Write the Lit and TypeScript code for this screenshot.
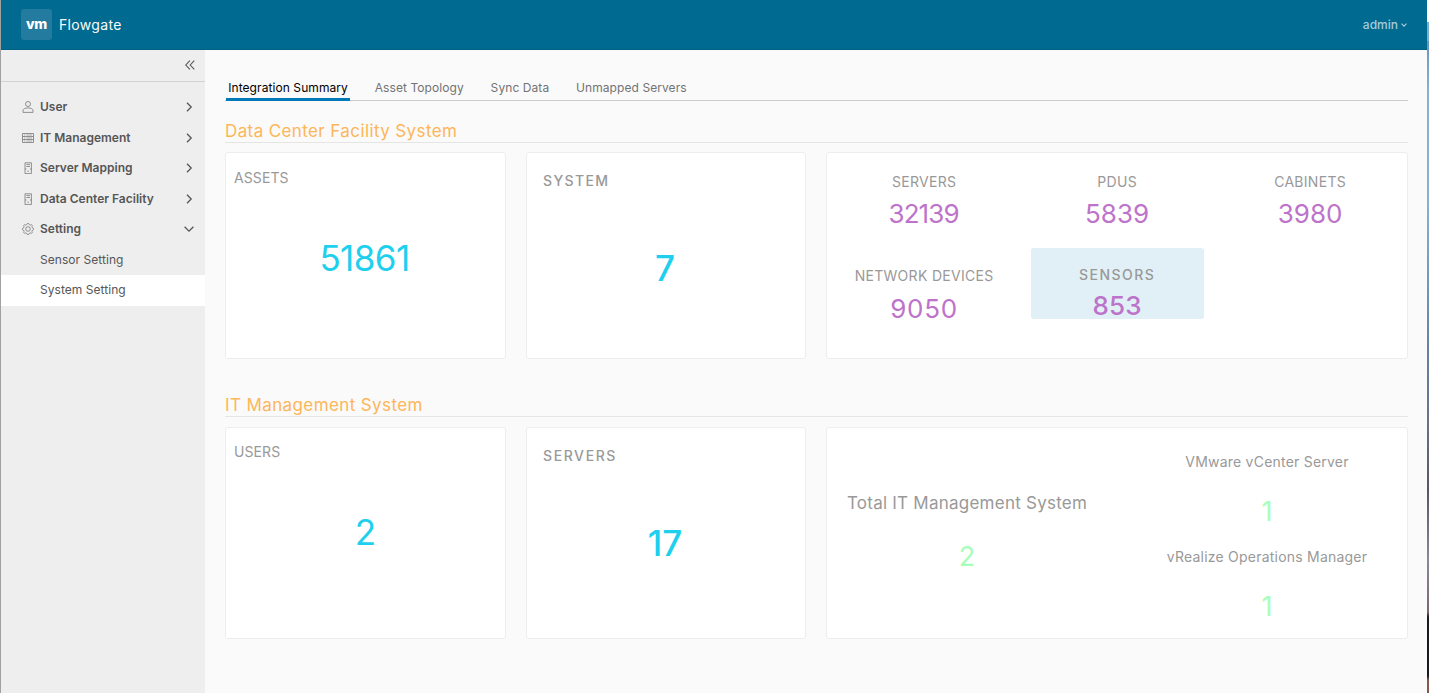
import { LitElement, html, css, svg, TemplateResult } from "lit";
import { customElement } from "lit/decorators.js";
import { classMap } from "lit/directives/class-map.js";

const userIcon = html`<svg class="icon" viewBox="0 0 12 12"><circle cx="6" cy="3" r="2.5"/><path d="M1 11.4V9.6C1 8 3 6.9 6 6.9S11 8 11 9.6v1.8z"/></svg>`;
const rackIcon = html`<svg class="icon" viewBox="0 0 12 12"><path d="M.5 1.5h11v9H.5zM.5 4.5h11M.5 7.5h11"/><path class="faint" d="M2 3h1.2M4.4 3H10M2 6h1.2M4.4 6H10M2 9h1.2M4.4 9H10"/></svg>`;
const hostIcon = html`<svg class="icon" viewBox="0 0 12 12"><path d="M3 .8h6.4v10.8H3zM4.4 2.6H8M4.4 4.5H8M5.4 9.2H7M3 7h1.4M8 7h1.4"/></svg>`;
const gearTeeth = Array.from({ length: 48 }, (_, i) => {
  const angle = (i / 48) * Math.PI * 2;
  const radius = 5.05 + 0.5 * Math.max(-1, Math.min(1, 1.8 * Math.cos(angle * 8)));
  return `${(6 + radius * Math.cos(angle)).toFixed(2)},${(6 + radius * Math.sin(angle)).toFixed(2)}`;
}).join(" ");
const gearIcon = html`<svg class="icon" viewBox="0 0 12 12">${svg`<polygon points=${gearTeeth}/>`}<circle cx="6" cy="6" r="2.3"/></svg>`;

const chevronRight = html`<svg class="chevron" viewBox="0 0 10 10"><path d="M3 .8 7.2 5 3 9.2"/></svg>`;
const chevronDown = html`<svg class="chevron" viewBox="0 0 10 10"><path d="M.6 2.8 5 7.2 9.4 2.8"/></svg>`;

interface NavGroup { label: string; icon: TemplateResult; children?: { label: string; active?: boolean }[] }
const navigation: NavGroup[] = [
  { label: "User", icon: userIcon },
  { label: "IT Management", icon: rackIcon },
  { label: "Server Mapping", icon: hostIcon },
  { label: "Data Center Facility", icon: hostIcon },
  { label: "Setting", icon: gearIcon, children: [{ label: "Sensor Setting" }, { label: "System Setting", active: true }] },
];

const tabs = ["Integration Summary", "Asset Topology", "Sync Data", "Unmapped Servers"];

const metrics = [
  { label: "SERVERS", value: "32139", cls: "tight" },
  { label: "PDUS", value: "5839", cls: "" },
  { label: "CABINETS", value: "3980", cls: "" },
  { label: "NETWORK DEVICES", value: "9050", cls: "loose" },
  { label: "SENSORS", value: "853", cls: "active" },
];

@customElement("app-root")
export class AppRoot extends LitElement {
  static styles = css`
    :host { display: block; height: 693px; overflow: hidden; font-family: Inter, "Liberation Sans", sans-serif; font-size: 12px; color: #565656; }
    * { box-sizing: border-box; }
    svg { display: block; fill: none; flex: none; }
    .desktop { display: grid; grid-template-columns: minmax(0, 1fr) 2px; height: 100%; }
    .edge { background: linear-gradient(#fff 0 22px, #79add2 22px 41px, #6c94b8 41px, #8bb0d2 90px 200px, #64829f 350px, #6c7189 420px, #555768 490px, #8a8799 560px, #7c6671 612px, #191a20 617px 676px, #86584f 680px); }
    .app { display: grid; grid-template-rows: 50px minmax(0, 1fr); border-left: 1px solid #a1a1a1; background: #fafafa; }
    .header { display: flex; align-items: center; padding: 0 20px; background: #006a91; border-bottom: 1px solid #005f85; color: #fafafa; }
    .logo { display: grid; place-items: center; width: 31px; height: 31px; border-radius: 3px; background: #237b9f; font-size: 14px; font-weight: 800; letter-spacing: -.3px; line-height: 14px; padding: 0 0 1px; color: #fff; }
    .brand { margin-left: 7px; font-size: 14px; letter-spacing: .34px; line-height: 20px; }
    .account { display: flex; align-items: center; gap: 3px; margin-left: auto; color: #a5ccdb; font-weight: 500; line-height: 20px; }
    .account svg { width: 6px; height: 6px; stroke: currentColor; stroke-width: 1.1; }
    .body { display: grid; grid-template-columns: 204px minmax(0, 1fr); }
    .sidebar { background: #eee; }
    .collapse { display: flex; justify-content: flex-end; align-items: center; height: 32px; padding: 0 10px 1px 0; border-bottom: 1px solid #d2d2d2; }
    .collapse svg { width: 10px; height: 10px; stroke: #565656; stroke-width: 1.1; }
    .nav { padding-top: 10px; }
    .row { display: flex; align-items: center; height: 30.5px; padding: 0 11px 0 21px; font-weight: 600; }
    .row .name { flex: 1; margin-left: 6px; line-height: 16px; }
    .icon { width: 12px; height: 12px; stroke: #777; stroke-width: .8; }
    .faint { stroke-opacity: .7; }
    .chevron { width: 10px; height: 10px; stroke: #565656; stroke-width: 1.3; }
    .child { height: 30.6px; line-height: 30.6px; padding-left: 39px; letter-spacing: .05px; }
    .child.active { background: #fff; }
    .main { padding: 25px 19px 0 20px; }
    .tabs { display: flex; gap: 22.4px; height: 26px; padding-left: 1px; border-bottom: 1px solid #ccc; }
    .tab { height: 26px; line-height: 25px; padding: 0 2.2px; letter-spacing: .08px; color: #737373; }
    .tab.active { color: #000; border-bottom: 3px solid #0079b8; }
    .heading { margin: 19px 0 0; height: 23px; line-height: 22px; border-bottom: 1px solid #e5e5e5; font-size: 17px; font-weight: 400; letter-spacing: .39px; color: #fdb658; }
    .heading.second { margin-top: 35px; }
    .cards { display: grid; grid-template-columns: 281px 280px minmax(0, 1fr); gap: 20px; margin-top: 9px; height: 207px; color: #999; }
    .cards.tall { height: 212px; margin-top: 10px; }
    .card { background: #fff; border: 1px solid #ededed; border-radius: 3px; }
    .stat { display: flex; flex-direction: column; padding: 15px 8px; }
    .stat .title { font-size: 14px; line-height: 20px; letter-spacing: .1px; }
    .stat .number { margin-top: 49px; font-size: 35px; line-height: 42px; text-align: center; color: #1fcfee; }
    .stat .narrow { letter-spacing: -.6px; padding-right: 2px; }
    .tall .stat { padding-top: 14px; }
    .stat.strong, .tall .stat.strong { padding: 18px 16px; font-weight: 550; }
    .stat.strong .title { letter-spacing: 1.35px; }
    .tall .stat.strong .title { letter-spacing: 1.6px; }
    .stat.strong .number { margin-top: 56px; padding-right: 2px; }
    .metrics { display: grid; grid-template-columns: repeat(3, 173px); grid-auto-rows: 71px; gap: 23.4px 20px; padding: 1px 10px 0 10.6px; align-content: start; }
    .metric { border-radius: 3px; padding-top: 18px; text-align: center; }
    .metric .label { font-size: 14px; line-height: 20px; letter-spacing: .3px; }
    .metric .value { margin-top: 5.6px; font-size: 26px; line-height: 32px; color: #bd73ca; }
    .metric.tight .value { letter-spacing: -.9px; padding-right: 1px; }
    .metric.loose .value { letter-spacing: .8px; margin-top: 6.6px; }
    .metric.active { background: #e1f0f6; padding-top: 16.8px; font-weight: 550; }
    .metric.active .label { letter-spacing: 1.45px; }
    .metric.active .value { margin-top: 5px; letter-spacing: .2px; }
    .systems { display: grid; grid-template-columns: 280px 280px; column-gap: 20px; text-align: center; font-size: 14px; }
    .total { padding-top: 64px; }
    .total .caption { font-size: 17px; line-height: 22px; letter-spacing: .24px; }
    .total .count { margin-top: 27px; }
    .count { font-size: 27px; line-height: 32px; color: #a6ffb8; }
    .vendors { display: flex; flex-direction: column; padding-top: 24px; }
    .vendors .caption { line-height: 20px; letter-spacing: .22px; }
    .vendors .count { margin-top: 24px; }
    .vendors .count + .caption { margin-top: 19px; }
  `;

  render() {
    return html`
      <div class="desktop">
        <div class="app">
          <header class="header">
            <span class="logo">vm</span><span class="brand">Flowgate</span>
            <span class="account">admin<svg viewBox="0 0 6 6"><path d="M.5 1.7 3 4.2 5.5 1.7"/></svg></span>
          </header>
          <div class="body">
            <aside class="sidebar">
              <div class="collapse"><svg viewBox="0 0 10 10"><path d="M4.9.6.8 5l4.1 4.4M9.3.6 5.2 5l4.1 4.4"/></svg></div>
              <nav class="nav">
                ${navigation.map((group) => html`
                  <div class="row">${group.icon}<span class="name">${group.label}</span>${group.children ? chevronDown : chevronRight}</div>
                  ${group.children?.map((child) => html`<div class=${classMap({ child: true, active: !!child.active })}>${child.label}</div>`)}
                `)}
              </nav>
            </aside>
            <main class="main">
              <div class="tabs">${tabs.map((tab, i) => html`<span class=${classMap({ tab: true, active: i === 0 })}>${tab}</span>`)}</div>
              <h3 class="heading">Data Center Facility System</h3>
              <section class="cards">
                <div class="card stat"><span class="title">ASSETS</span><span class="number narrow">51861</span></div>
                <div class="card stat strong"><span class="title">SYSTEM</span><span class="number">7</span></div>
                <div class="card metrics">
                  ${metrics.map((m) => html`<div class="metric ${m.cls}"><div class="label">${m.label}</div><div class="value">${m.value}</div></div>`)}
                </div>
              </section>
              <h3 class="heading second">IT Management System</h3>
              <section class="cards tall">
                <div class="card stat"><span class="title">USERS</span><span class="number">2</span></div>
                <div class="card stat strong"><span class="title">SERVERS</span><span class="number">17</span></div>
                <div class="card systems">
                  <div class="total"><div class="caption">Total IT Management System</div><div class="count">2</div></div>
                  <div class="vendors">
                    <div class="caption">VMware vCenter Server</div><div class="count">1</div>
                    <div class="caption">vRealize Operations Manager</div><div class="count">1</div>
                  </div>
                </div>
              </section>
            </main>
          </div>
        </div>
        <div class="edge"></div>
      </div>
    `;
  }
}
